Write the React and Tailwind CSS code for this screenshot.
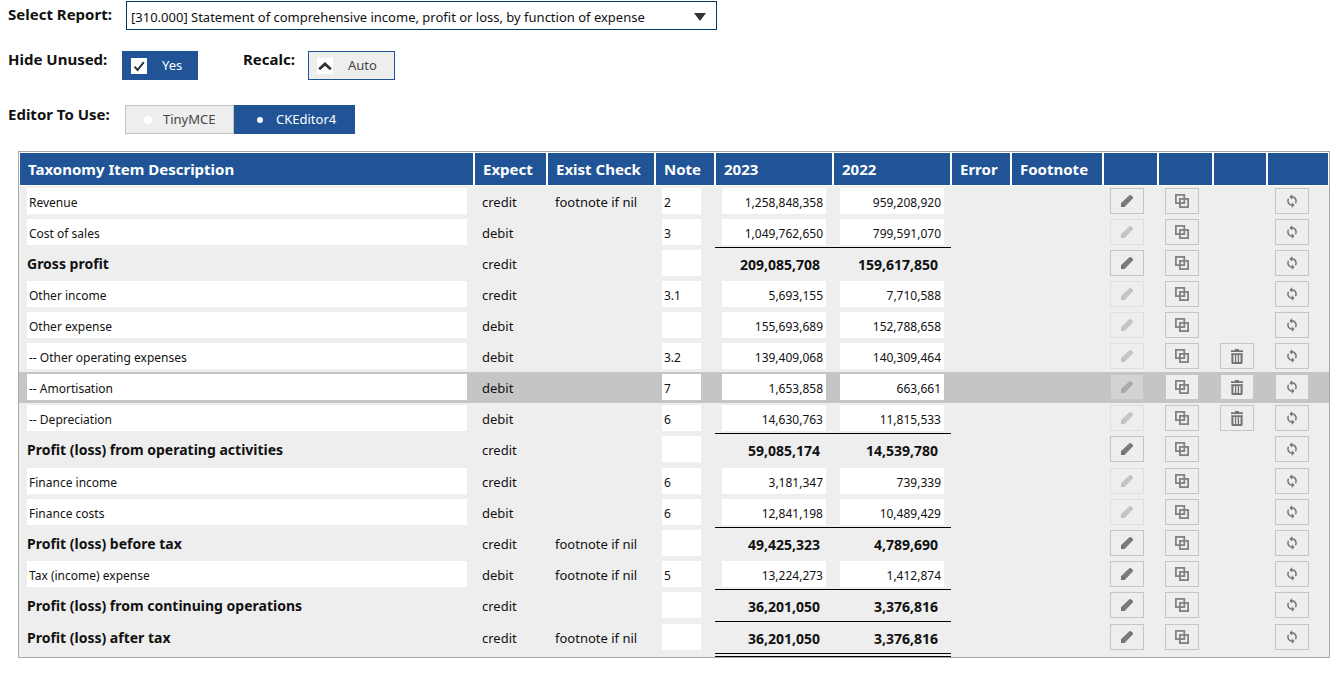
import { useState } from 'react';

const rows = [
  { name: 'Revenue', expect: 'credit', check: 'footnote if nil', note: '2', y1: '1,258,848,358', y2: '959,208,920', edit: true },
  { name: 'Cost of sales', expect: 'debit', note: '3', y1: '1,049,762,650', y2: '799,591,070' },
  { name: 'Gross profit', expect: 'credit', y1: '209,085,708', y2: '159,617,850', total: true, edit: true },
  { name: 'Other income', expect: 'credit', note: '3.1', y1: '5,693,155', y2: '7,710,588' },
  { name: 'Other expense', expect: 'debit', y1: '155,693,689', y2: '152,788,658' },
  { name: '-- Other operating expenses', expect: 'debit', note: '3.2', y1: '139,409,068', y2: '140,309,464', custom: true },
  { name: '-- Amortisation', expect: 'debit', note: '7', y1: '1,653,858', y2: '663,661', custom: true, active: true },
  { name: '-- Depreciation', expect: 'debit', note: '6', y1: '14,630,763', y2: '11,815,533', custom: true },
  { name: 'Profit (loss) from operating activities', expect: 'credit', y1: '59,085,174', y2: '14,539,780', total: true, edit: true, tall: true },
  { name: 'Finance income', expect: 'credit', note: '6', y1: '3,181,347', y2: '739,339' },
  { name: 'Finance costs', expect: 'debit', note: '6', y1: '12,841,198', y2: '10,489,429' },
  { name: 'Profit (loss) before tax', expect: 'credit', check: 'footnote if nil', y1: '49,425,323', y2: '4,789,690', total: true, edit: true },
  { name: 'Tax (income) expense', expect: 'debit', check: 'footnote if nil', note: '5', y1: '13,224,273', y2: '1,412,874', edit: true },
  { name: 'Profit (loss) from continuing operations', expect: 'credit', y1: '36,201,050', y2: '3,376,816', total: true, edit: true, tall: true },
  { name: 'Profit (loss) after tax', expect: 'credit', check: 'footnote if nil', y1: '36,201,050', y2: '3,376,816', total: true, edit: true },
];

const columns = [
  ['Taxonomy Item Description', ''],
  ['Expect', 'w-[73px]'],
  ['Exist Check', 'w-[108px]'],
  ['Note', 'w-[60px]'],
  ['2023', 'w-[118px]'],
  ['2022', 'w-[118px]'],
  ['Error', 'w-[60px]'],
  ['Footnote', 'w-[92px]'],
  ['', 'w-[55px]'],
  ['', 'w-[55px]'],
  ['', 'w-[54px]'],
  ['', 'w-[62px]'],
];

function PencilIcon() {
  return (
    <svg width="14" height="14" viewBox="0 0 14 14" aria-hidden="true">
      <path d="M1 9.200 9.400 1.200q.8-.6 1.600 0l1.800 1.800q.6.8 0 1.600L4.600 13H1z" fill="#737373" />
      <path d="M3 9.800 10 3M4.600 11.200 11.400 4.400" stroke="#999" strokeWidth=".6" />
    </svg>
  );
}

function CopyIcon() {
  return (
    <svg width="14" height="14" viewBox="0 0 14 14" fill="none" stroke="#828282" strokeWidth="1.8" aria-hidden="true">
      <rect x=".9" y=".9" width="8.4" height="8.2" />
      <rect x="4.9" y="4.9" width="8.2" height="8.2" />
    </svg>
  );
}

function TrashIcon() {
  return (
    <svg width="14" height="15" viewBox="0 0 14 15" fill="#737373" aria-hidden="true">
      <path d="M5 0h4v1.200h4V3H1V1.200h4zM1 4.200h12v1h-.4v8.300q0 1.500-1.500 1.500H2.900q-1.500 0-1.500-1.500V5.200H1z" />
      <path d="M3.400 6H5v7H3.400zM6.200 6h1.600v7H6.200zM9 6h1.600v7H9z" fill="#e6e6e6" />
    </svg>
  );
}

function LoopIcon() {
  return (
    <svg width="14" height="14" viewBox="0 0 24 24" fill="#6f6f6f" stroke="#6f6f6f" strokeWidth=".5" aria-hidden="true">
      <path d="M12 4V1L8 5l4 4V6c3.310 0 6 2.690 6 6 0 1.010-.25 1.970-.7 2.800l1.460 1.460A7.930 7.930 0 0 0 20 12c0-4.420-3.580-8-8-8zm0 14c-3.310 0-6-2.690-6-6 0-1.010.25-1.970.7-2.800L5.240 7.740A7.930 7.930 0 0 0 4 12c0 4.420 3.580 8 8 8v3l4-4-4-4v3z" />
    </svg>
  );
}

function IconButton({ label, disabled, children }) {
  return (
    <button
      type="button"
      aria-label={label}
      disabled={disabled}
      className="flex h-[26px] w-[34px] items-center justify-center border border-[#c5c5c5] bg-[#eeeeee] disabled:opacity-35"
    >
      {children}
    </button>
  );
}

function Amount({ row, value, label, ruleBelow, last }) {
  const rule = last ? 'border-b-4 border-double border-black' : ruleBelow ? 'border-b border-black' : '';
  return (
    <td className={`pl-[7px] pt-[2px] align-top ${rule}`}>
      {row.total ? (
        <div className="w-[98px] pt-[3px] text-right text-sm leading-6 font-bold">{value}</div>
      ) : (
        <input aria-label={label} defaultValue={value} className="block h-[26px] w-[104px] bg-white pt-[2px] pr-[3px] text-right text-xs" />
      )}
    </td>
  );
}

export default function App() {
  const [hide, setHide] = useState(true);
  const [auto, setAuto] = useState(true);
  const [editor, setEditor] = useState('CKEditor4');

  return (
    <main className="bg-white pb-5 font-['Noto_Sans','Open_Sans',sans-serif] text-[#111]">
      <div className="flex items-start gap-3 pt-px pl-2">
        <label htmlFor="report" className="w-[106px] pt-px text-[15px] leading-6 font-bold">Select Report:</label>
        <div className="relative h-[29px] w-[591px]">
          <select id="report" className="h-full w-full appearance-none border border-[#003c66] bg-white pt-1 pl-1 text-[13px]">
            <option>[310.000] Statement of comprehensive income, profit or loss, by function of expense</option>
          </select>
          <svg className="pointer-events-none absolute top-3 right-[11px]" width="12" height="8" viewBox="0 0 12 8" aria-hidden="true">
            <path d="M0 0h12L6 8z" fill="#333" />
          </svg>
        </div>
      </div>

      <div className="mt-[21px] flex items-start pl-2">
        <label htmlFor="hide" className="w-[114px] text-[15px] leading-4 font-bold">Hide Unused:</label>
        <label className="flex h-[29px] w-[76px] items-center bg-[#205497] pl-[9px] text-white">
          <span className="relative flex size-4">
            <input id="hide" type="checkbox" checked={hide} onChange={(e) => setHide(e.target.checked)} className="size-4 appearance-none bg-white" />
            {hide && (
              <svg className="pointer-events-none absolute inset-0" width="16" height="16" viewBox="0 0 16 16" fill="none" stroke="#333" aria-hidden="true">
                <path d="M3.500 8.600 6.600 12 12.800 4.200" strokeWidth="2" />
              </svg>
            )}
          </span>
          <span className="pl-[15px] text-[13px]">Yes</span>
        </label>
        <label htmlFor="recalc" className="ml-[45px] w-[65px] text-[15px] leading-4 font-bold">Recalc:</label>
        <button id="recalc" type="button" aria-pressed={auto} onClick={() => setAuto(!auto)} className="flex h-[29px] w-[87px] items-center border border-[#205497] bg-[#eeeeee] pl-2 text-[#454545]">
          <svg className="bg-white" width="16" height="16" viewBox="0 0 16 16" fill="none" stroke="#333" aria-hidden="true">
            <path d="M2.200 11.200 8 6l5.800 5.200" strokeWidth="2.800" />
          </svg>
          <span className="pl-[15px] text-[13px]">Auto</span>
        </button>
      </div>

      <fieldset className="mt-[25px] flex items-start pl-2">
        <legend className="float-left w-[117px] text-[15px] leading-[18px] font-bold">Editor To Use:</legend>
        {['TinyMCE', 'CKEditor4'].map((name) => {
          const on = editor === name;
          return (
            <label
              key={name}
              className={`flex h-[29px] items-center pt-px text-[13px] ${name === 'TinyMCE' ? 'w-[109px]' : 'w-[121px]'} ${on ? 'bg-[#205497] pl-[23px] text-white' : 'border border-[#c5c5c5] bg-[#eeeeee] pl-[18px] text-[#454545]'}`}
            >
              <input
                type="radio"
                name="editor"
                checked={on}
                onChange={() => setEditor(name)}
                className={`appearance-none rounded-full bg-white ${on ? 'mr-[13px] size-[6px]' : 'mr-[11px] size-2'}`}
              />
              {name}
            </label>
          );
        })}
      </fieldset>

      <div className="mt-[17px] mr-[14px] ml-[18px] border border-[#a6aaa4]">
        <table className="w-full table-fixed border-separate border-spacing-0">
          <thead>
            <tr className="h-[34px]">
              {columns.map(([title, width], i) => (
                <th key={i} scope="col" className={`border border-white bg-[#205497] pl-2 text-left text-[15px] font-bold text-white ${width}`}>{title}</th>
              ))}
            </tr>
          </thead>
          <tbody>
            {rows.map((row, i) => {
              const last = i === rows.length - 1;
              const ruleBelow = !last && rows[i + 1].total;
              const height = last ? 'h-[35px]' : row.tall ? 'h-[32px]' : 'h-[31px]';
              return (
                <tr key={row.name} className={`${height} ${row.active ? 'bg-[#c5c5c5]' : 'bg-[#eeeeee]'} text-[13px]`}>
                  <td className="pt-[2px] pr-[7px] pl-2 align-top">
                    {row.total ? (
                      <div className="pt-[2px] text-sm leading-6 font-bold">{row.name}</div>
                    ) : (
                      <input aria-label="Description" defaultValue={row.name} className="block h-[26px] w-full bg-white pt-[2px] pl-[2px] text-xs" />
                    )}
                  </td>
                  <td className="pt-1 pl-2 align-top leading-6">{row.expect}</td>
                  <td className="pt-1 pl-2 align-top leading-6">{row.check}</td>
                  <td className="pt-[2px] pl-[7px] align-top">
                    <input aria-label="Note" defaultValue={row.note} className="block h-[26px] w-[39px] bg-white pt-[2px] pl-[2px] text-xs" />
                  </td>
                  <Amount row={row} value={row.y1} label="2023" ruleBelow={ruleBelow} last={last} />
                  <Amount row={row} value={row.y2} label="2022" ruleBelow={ruleBelow} last={last} />
                  <td />
                  <td />
                  <td className="pt-[2px] pl-[7px] align-top"><IconButton label="Edit" disabled={!row.edit}><PencilIcon /></IconButton></td>
                  <td className="pt-[2px] pl-[7px] align-top"><IconButton label="Copy"><CopyIcon /></IconButton></td>
                  <td className="pt-[2px] pl-[7px] align-top">{row.custom && <IconButton label="Delete"><TrashIcon /></IconButton>}</td>
                  <td className="pt-[2px] pl-2 align-top"><IconButton label="Refresh"><LoopIcon /></IconButton></td>
                </tr>
              );
            })}
          </tbody>
        </table>
      </div>
    </main>
  );
}
